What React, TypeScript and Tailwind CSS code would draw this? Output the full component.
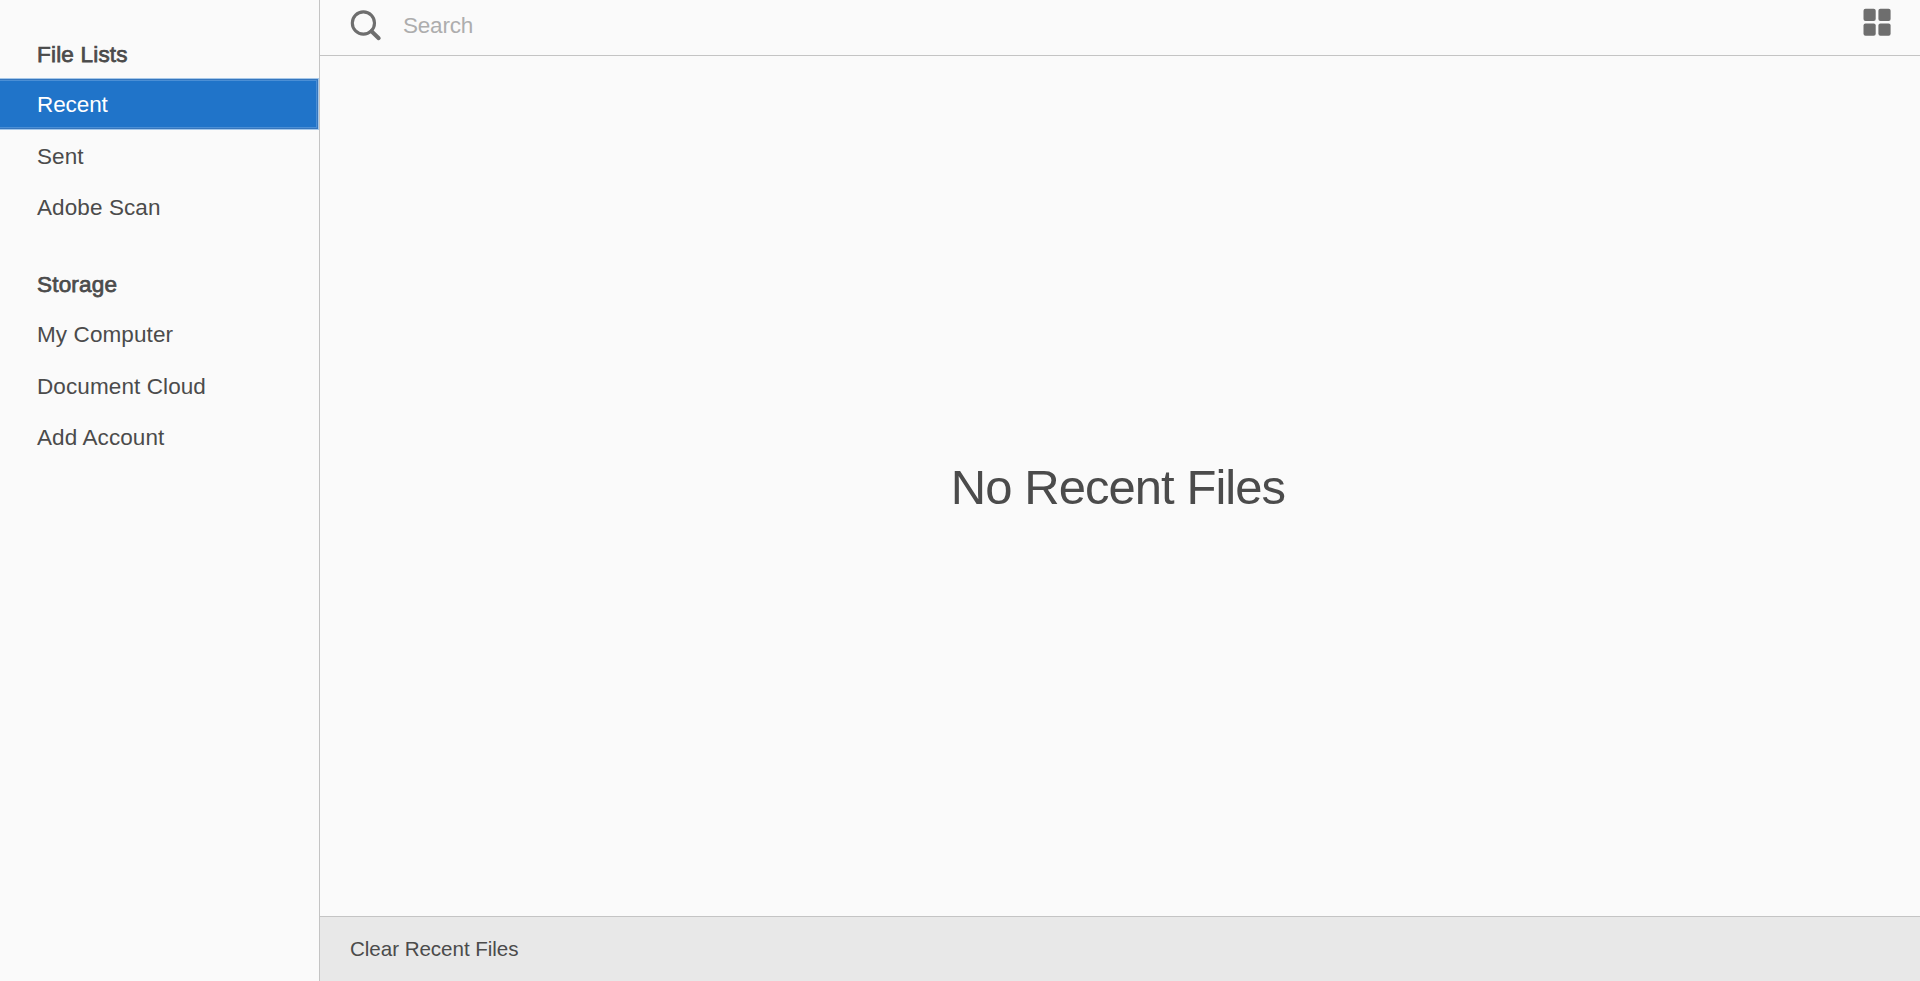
import { useState } from "react";
import clsx from "clsx";

const sections = [
  { title: "File Lists", items: ["Recent", "Sent", "Adobe Scan"] },
  { title: "Storage", items: ["My Computer", "Document Cloud", "Add Account"] },
];

const SearchIcon = () => (
  <svg className="w-8 h-8 mb-1 shrink-0" viewBox="0 0 32 32" fill="none" stroke="#6e6e6e">
    <circle cx="13.4" cy="13" r="11.1" strokeWidth="3.1" />
    <path d="M21.5 21.2 L28.7 28.2" strokeWidth="4" strokeLinecap="round" />
  </svg>
);

const GridIcon = () => (
  <svg className="w-7 h-7" viewBox="0 0 28 28" fill="#6e6e6e">
    <rect x="0.5" y="0.8" width="12.2" height="12.2" rx="2" />
    <rect x="15.4" y="0.8" width="12.2" height="12.2" rx="2" />
    <rect x="0.5" y="15.6" width="12.2" height="12.2" rx="2" />
    <rect x="15.4" y="15.6" width="12.2" height="12.2" rx="2" />
  </svg>
);

const Sidebar = ({ active, onSelect }: { active: string; onSelect: (item: string) => void }) => (
  <aside className="w-80 shrink-0 border-r border-[#c4c4c4] pt-7 text-[22.5px] tracking-[0.1px]">
    {sections.map((section) => (
      <nav key={section.title} className="mb-[25px]">
        <h2 className="h-[50px] pl-[37px] leading-[53px] tracking-[0.2px] [-webkit-text-stroke:0.75px_#4b4b4b]">
          {section.title}
        </h2>
        {section.items.map((item) => (
          <button
            key={item}
            onClick={() => onSelect(item)}
            className={clsx(
              "-ml-1 block h-[51.7px] w-[323px] pl-[41px] text-left leading-[53px]",
              active === item &&
                "bg-[#2074c9] tracking-[-0.1px] text-white shadow-[inset_0_0_0_1px_#a5c8ea,inset_0_0_0_2px_#3676bd,inset_0_0_0_3px_#4b8fd5]"
            )}
          >
            {item}
          </button>
        ))}
      </nav>
    ))}
  </aside>
);

const App = () => {
  const [active, setActive] = useState("Recent");

  return (
    <div className="flex h-screen overflow-hidden bg-[#fafafa] font-['Liberation_Sans',Arial,sans-serif] text-[#4b4b4b]">
      <Sidebar active={active} onSelect={setActive} />
      <div className="flex min-w-0 flex-1 flex-col">
        <header className="flex h-14 items-center border-b border-[#c4c4c4] pr-[29px] pl-[30px]">
          <SearchIcon />
          <input
            placeholder="Search"
            className="ml-[21px] h-9 flex-1 pb-1 text-[22.5px] tracking-[-0.2px] outline-none placeholder:text-[#adadad]"
          />
          <button className="pb-3">
            <GridIcon />
          </button>
        </header>
        <main className="flex flex-1 items-center justify-center pt-1 pr-1">
          <h1 className="text-[49px] tracking-[-0.95px]">No Recent Files</h1>
        </main>
        <footer className="flex h-[65px] items-center border-t border-[#c4c4c4] bg-[#e8e8e8] pl-[30px]">
          <button className="text-[20.6px] tracking-[-0.05px]">Clear Recent Files</button>
        </footer>
      </div>
    </div>
  );
};

export default App;
